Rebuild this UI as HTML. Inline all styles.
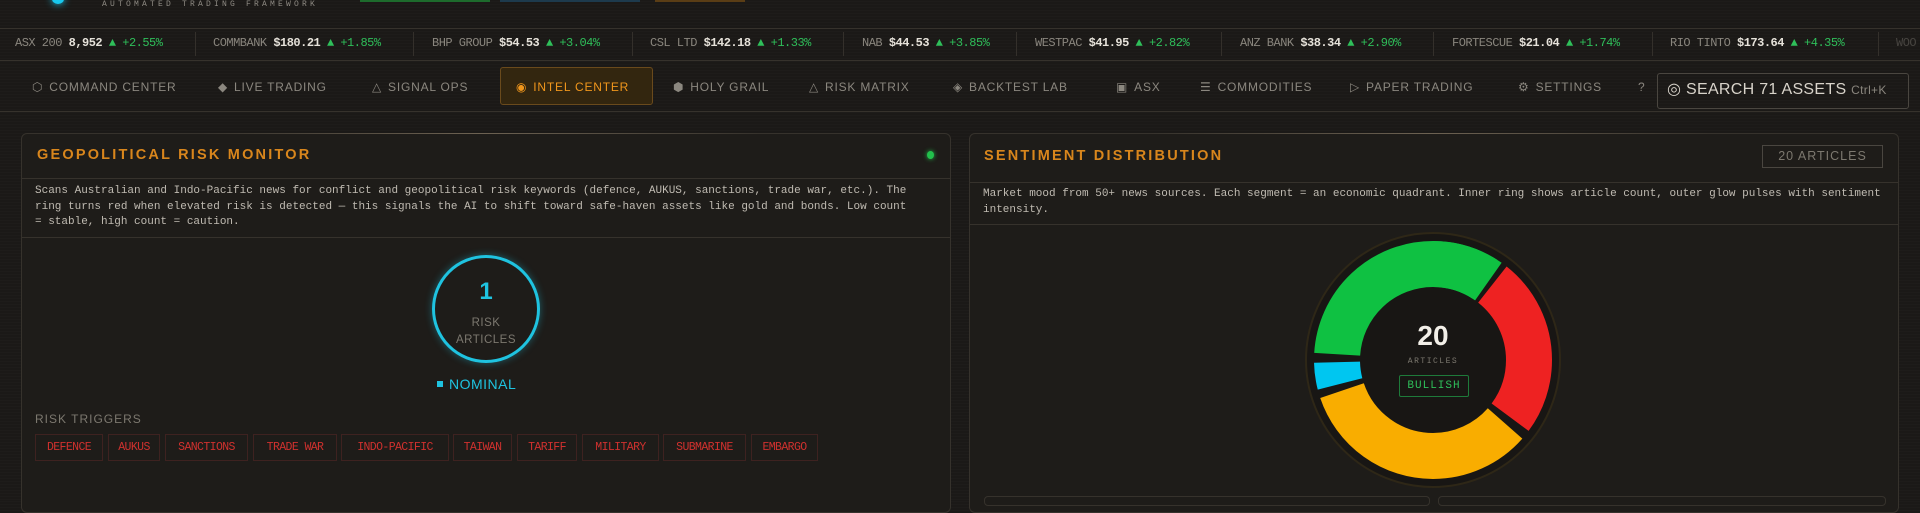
<!DOCTYPE html>
<html><head><meta charset="utf-8"><style>
*{margin:0;padding:0;box-sizing:border-box}
body{width:1920px;height:500px;overflow:hidden;background:#1b1917;font-family:"Liberation Sans","DejaVu Sans",sans-serif;color:#9a958c;position:relative;
background-image:repeating-linear-gradient(0deg,rgba(255,255,255,0.012) 0 1px,transparent 1px 3px);}
.abs{position:absolute}
.mono{font-family:"Liberation Mono","DejaVu Sans Mono",monospace}
.tick{position:absolute;top:36px;font-size:12px;white-space:nowrap;font-family:"Liberation Mono",monospace;letter-spacing:-0.5px}
.tick .n{color:#8a867e}.tick .p{color:#e6e2da;font-weight:bold}.tick .g{color:#2fbf5a}
.div{position:absolute;top:32px;width:1px;height:24px;background:#34302b}
.nav{position:absolute;top:80px;font-size:12px;color:#8b877f;letter-spacing:0.8px;white-space:nowrap}
.nav i{font-style:normal;margin-right:6px;color:#8b877f}
.panel{position:absolute;top:133px;height:380px;border:1px solid #36322c;border-radius:6px;background:#1e1c19}
.title{position:absolute;font-size:14.5px;font-weight:bold;color:#d9861c;letter-spacing:2.2px}
.desc{position:absolute;font-family:"Liberation Mono",monospace;font-size:11px;line-height:15.5px;color:#c0bbb2;letter-spacing:0}
.hl{position:absolute;height:1px;background:#36322c}
.tag{position:absolute;top:434px;height:27px;border:1px solid #3e2220;color:#d0312e;font-family:"Liberation Mono",monospace;font-size:11.5px;line-height:25px;text-align:center;letter-spacing:-0.6px}
</style></head><body>
<div class="abs" style="left:52px;top:-6px;width:12px;height:10px;border-radius:50%;background:#18c8ee;box-shadow:0 0 8px #18c8ee"></div>
<div class="abs mono" style="left:102px;top:0px;font-size:8px;letter-spacing:3.2px;color:#8e8a83">AUTOMATED TRADING FRAMEWORK</div>
<div class="abs" style="left:360px;top:0;width:130px;height:2px;background:#1d6b2c"></div>
<div class="abs" style="left:500px;top:0;width:140px;height:2px;background:#1d3a4d"></div>
<div class="abs" style="left:655px;top:0;width:90px;height:2px;background:#5a3d15"></div>
<div class="hl" style="left:0;top:28px;width:1920px"></div>
<div class="hl" style="left:0;top:60px;width:1920px"></div>
<div class="tick" style="left:15px"><span class="n">ASX 200</span> <span class="p">8,952</span> <span class="g">▲ +2.55%</span></div>
<div class="div" style="left:195px"></div>
<div class="tick" style="left:213px"><span class="n">COMMBANK</span> <span class="p">$180.21</span> <span class="g">▲ +1.85%</span></div>
<div class="div" style="left:413px"></div>
<div class="tick" style="left:432px"><span class="n">BHP GROUP</span> <span class="p">$54.53</span> <span class="g">▲ +3.04%</span></div>
<div class="div" style="left:632px"></div>
<div class="tick" style="left:650px"><span class="n">CSL LTD</span> <span class="p">$142.18</span> <span class="g">▲ +1.33%</span></div>
<div class="div" style="left:843px"></div>
<div class="tick" style="left:862px"><span class="n">NAB</span> <span class="p">$44.53</span> <span class="g">▲ +3.85%</span></div>
<div class="div" style="left:1016px"></div>
<div class="tick" style="left:1035px"><span class="n">WESTPAC</span> <span class="p">$41.95</span> <span class="g">▲ +2.82%</span></div>
<div class="div" style="left:1221px"></div>
<div class="tick" style="left:1240px"><span class="n">ANZ BANK</span> <span class="p">$38.34</span> <span class="g">▲ +2.90%</span></div>
<div class="div" style="left:1433px"></div>
<div class="tick" style="left:1452px"><span class="n">FORTESCUE</span> <span class="p">$21.04</span> <span class="g">▲ +1.74%</span></div>
<div class="div" style="left:1652px"></div>
<div class="tick" style="left:1670px"><span class="n">RIO TINTO</span> <span class="p">$173.64</span> <span class="g">▲ +4.35%</span></div>
<div class="div" style="left:1878px"></div>
<div class="tick" style="left:1896px"><span class="n" style="opacity:.4">WOO</span></div>

<div class="nav" style="left:32px"><i>⬡</i>COMMAND CENTER</div>
<div class="nav" style="left:218px"><i>◆</i>LIVE TRADING</div>
<div class="nav" style="left:372px"><i>△</i>SIGNAL OPS</div>
<div class="abs" style="left:500px;top:67px;width:153px;height:38px;border:1px solid #6a4a1c;border-radius:3px;background:#33260f"></div>
<div class="nav" style="left:516px;color:#f0961c"><i style="color:#f0961c">◉</i>INTEL CENTER</div>
<div class="nav" style="left:673px"><i>⬢</i>HOLY GRAIL</div>
<div class="nav" style="left:809px"><i>△</i>RISK MATRIX</div>
<div class="nav" style="left:953px"><i>◈</i>BACKTEST LAB</div>
<div class="nav" style="left:1116px"><i>▣</i>ASX</div>
<div class="nav" style="left:1200px"><i>☰</i>COMMODITIES</div>
<div class="nav" style="left:1350px"><i>▷</i>PAPER TRADING</div>
<div class="nav" style="left:1518px"><i>⚙</i>SETTINGS</div>
<div class="nav" style="left:1638px">?</div>
<div class="abs" style="left:1657px;top:73px;width:252px;height:36px;border:1px solid #4a4640;border-radius:3px"></div>
<div class="abs" style="left:1667px;top:79px;font-size:16px;color:#d8d3ca;letter-spacing:0.3px">◎ SEARCH 71 ASSETS <span style="font-size:12px;color:#8a867e">Ctrl+K</span></div>
<div class="hl" style="left:0;top:111px;width:1920px"></div>

<!-- left panel -->
<div class="panel" style="left:21px;width:930px"></div>
<div class="abs" style="left:200px;top:133px;width:560px;height:1px;background:linear-gradient(90deg,transparent,#6d6252,transparent)"></div>
<div class="title" style="left:37px;top:147px">GEOPOLITICAL RISK MONITOR</div>
<div class="abs" style="left:927px;top:151px;width:7px;height:8px;border-radius:50%;background:#22c04c;box-shadow:0 0 5px #22c04c"></div>
<div class="hl" style="left:22px;top:178px;width:928px"></div>
<div class="desc" style="left:35px;top:184px;width:882px">Scans Australian and Indo-Pacific news for conflict and geopolitical risk keywords (defence, AUKUS, sanctions, trade war, etc.). The ring turns red when elevated risk is detected — this signals the AI to shift toward safe-haven assets like gold and bonds. Low count = stable, high count = caution.</div>
<div class="hl" style="left:22px;top:237px;width:928px"></div>
<div class="abs" style="left:432px;top:255px;width:108px;height:108px;border:3px solid #1fc3e0;border-radius:50%;box-shadow:0 0 8px rgba(31,195,224,.4)"></div>
<div class="abs" style="left:432px;top:278px;width:108px;text-align:center;font-size:24px;font-weight:bold;color:#1fc3e0">1</div>
<div class="abs" style="left:432px;top:315px;width:108px;text-align:center;font-size:11.5px;line-height:17px;color:#7c786f;letter-spacing:0.5px">RISK<br>ARTICLES</div>
<div class="abs" style="left:437px;top:376px;font-size:14px;color:#1fc3e0;letter-spacing:0.5px"><span style="display:inline-block;width:6px;height:6px;background:#1fc3e0;margin-right:6px;vertical-align:2px"></span>NOMINAL</div>
<div class="abs" style="left:35px;top:412px;font-size:12px;color:#7c786f;letter-spacing:1px">RISK TRIGGERS</div>
<div class="tag" style="left:35px;width:68px">DEFENCE</div>
<div class="tag" style="left:108px;width:52px">AUKUS</div>
<div class="tag" style="left:165px;width:83px">SANCTIONS</div>
<div class="tag" style="left:253px;width:84px">TRADE WAR</div>
<div class="tag" style="left:341px;width:108px">INDO-PACIFIC</div>
<div class="tag" style="left:453px;width:59px">TAIWAN</div>
<div class="tag" style="left:517px;width:60px">TARIFF</div>
<div class="tag" style="left:582px;width:77px">MILITARY</div>
<div class="tag" style="left:663px;width:83px">SUBMARINE</div>
<div class="tag" style="left:751px;width:67px">EMBARGO</div>

<!-- right panel -->
<div class="panel" style="left:969px;width:930px"></div>
<div class="abs" style="left:1150px;top:133px;width:560px;height:1px;background:linear-gradient(90deg,transparent,#6d6252,transparent)"></div>
<div class="title" style="left:984px;top:148px">SENTIMENT DISTRIBUTION</div>
<div class="abs" style="left:1762px;top:145px;width:121px;height:23px;border:1px solid #4a4640;font-size:12.5px;color:#7c786f;text-align:center;line-height:21px;letter-spacing:1px">20 ARTICLES</div>
<div class="hl" style="left:970px;top:182px;width:928px"></div>
<div class="desc" style="left:983px;top:187px;width:912px">Market mood from 50+ news sources. Each segment = an economic quadrant. Inner ring shows article count, outer glow pulses with sentiment intensity.</div>
<div class="hl" style="left:970px;top:224px;width:928px"></div>
<svg class="abs" style="left:1293px;top:220px" width="280" height="280" viewBox="0 0 280 280">
<circle cx="140" cy="140" r="127" fill="#181614" stroke="#2e2717" stroke-width="2"/>
<g transform="rotate(-90 140 140)" fill="none" stroke-width="46">
<circle cx="140" cy="140" r="96" stroke="#0fc142" stroke-dasharray="200 403.2" stroke-dashoffset="-458"/>
<circle cx="140" cy="140" r="96" stroke="#0fc142" stroke-dasharray="59 544.2" stroke-dashoffset="0"/>
<circle cx="140" cy="140" r="96" stroke="#ee2222" stroke-dasharray="148 455.2" stroke-dashoffset="-64"/>
<circle cx="140" cy="140" r="96" stroke="#f9ad00" stroke-dasharray="201 402.2" stroke-dashoffset="-220"/>
<circle cx="140" cy="140" r="96" stroke="#00c6f0" stroke-dasharray="22 581.2" stroke-dashoffset="-428"/>
</g>
</svg>
<div class="abs" style="left:1293px;top:320px;width:280px;text-align:center;font-size:28px;font-weight:bold;color:#f2efe8">20</div>
<div class="abs mono" style="left:1293px;top:357px;width:280px;text-align:center;font-size:8px;color:#7c786f;letter-spacing:1.5px">ARTICLES</div>
<div class="abs mono" style="left:1399px;top:375px;width:70px;height:22px;border:1px solid #1e7a3a;border-radius:2px;text-align:center;line-height:20px;font-size:11px;color:#2fbf5a;letter-spacing:1px">BULLISH</div>
<div class="abs" style="left:984px;top:496px;width:446px;height:10px;border:1px solid #36322c;border-radius:4px"></div>
<div class="abs" style="left:1438px;top:496px;width:448px;height:10px;border:1px solid #36322c;border-radius:4px"></div>
</body></html>
